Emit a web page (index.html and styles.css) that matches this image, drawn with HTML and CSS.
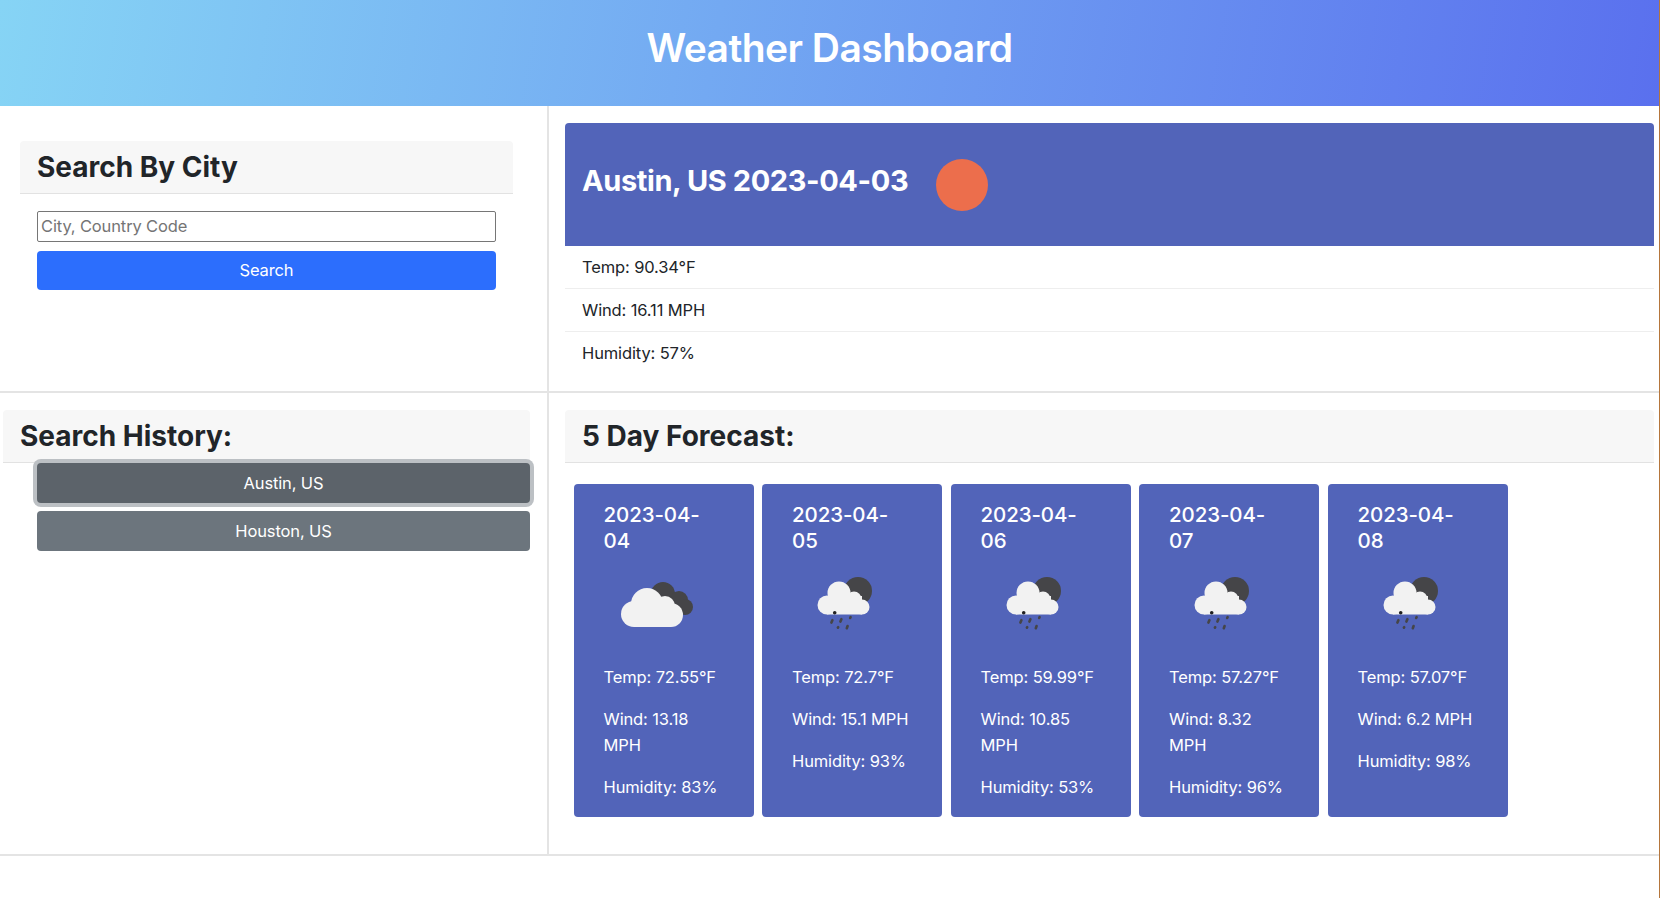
FILE: index.html
```html
<!DOCTYPE html>
<html lang="en">
<head>
  <meta charset="UTF-8">
  <meta name="viewport" content="width=device-width, initial-scale=1.0">
  <title>Weather Dashboard</title>
  <link rel="stylesheet" href="styles.css">
</head>
<body>

  <svg class="iconDefs" width="0" height="0">
    <symbol id="cloudsIcon" viewBox="0 0 100 100">
      <g fill="#454548">
        <circle cx="59" cy="40" r="12"/>
        <circle cx="75" cy="46" r="9"/>
        <circle cx="81" cy="53" r="8"/>
        <rect x="55" y="44" width="24" height="15"/>
      </g>
      <g fill="#f2f2f2">
        <circle cx="30" cy="60" r="13"/>
        <circle cx="43" cy="50" r="16"/>
        <circle cx="61" cy="52" r="10"/>
        <circle cx="67" cy="61" r="12"/>
        <rect x="30" y="50" width="37" height="23"/>
      </g>
    </symbol>
    <symbol id="rainIcon" viewBox="0 0 100 100">
      <circle cx="66" cy="37" r="14" fill="#454548"/>
      <g fill="#f2f2f2">
        <circle cx="35" cy="51" r="9.5"/>
        <circle cx="47" cy="39" r="11.5"/>
        <circle cx="62" cy="45" r="7.5"/>
        <circle cx="70" cy="53" r="7.5"/>
        <rect x="35" y="42" width="35" height="18.5"/>
      </g>
      <circle cx="42.7" cy="58.7" r="1.8" fill="#222"/>
      <g stroke="#454548" stroke-width="2.6" stroke-linecap="round">
        <path d="M40.4 66.2 L39.4 68.6"/>
        <path d="M49.4 65.2 L48.4 67.6"/>
        <path d="M58.6 63.2 L58.2 64"/>
        <path d="M46.2 73.2 L45.9 73.6"/>
        <path d="M55.6 72 L54.8 74.2"/>
      </g>
    </symbol>
  </svg>

  <div id="header">
    <h1>Weather Dashboard</h1>
  </div>

  <div class="row">
    <div class="sideCol searchCol">
      <div class="cardHeader">
        <h3>Search By City</h3>
      </div>
      <div class="searchForm">
        <input type="text" id="cityInput" placeholder="City, Country Code">
        <button class="searchBtn">Search</button>
      </div>
    </div>
    <div class="mainCol">
      <div class="todayHeader">
        <h2>Austin, US 2023-04-03</h2>
        <div class="sun"></div>
      </div>
      <ul class="todayList">
        <li>Temp: 90.34°F</li>
        <li>Wind: 16.11 MPH</li>
        <li>Humidity: 57%</li>
      </ul>
    </div>
  </div>

  <div class="row">
    <div class="sideCol historyCol">
      <div class="cardHeader">
        <h3>Search History:</h3>
      </div>
      <div class="historyList">
        <button class="historyBtn active">Austin, US</button>
        <button class="historyBtn">Houston, US</button>
      </div>
    </div>
    <div class="mainCol">
      <div class="cardHeader">
        <h3>5 Day Forecast:</h3>
      </div>
      <div class="forecast">
        <div class="dayCard">
          <h5>2023-04-04</h5>
          <svg class="dayIcon"><use href="#cloudsIcon"/></svg>
          <p>Temp: 72.55°F</p>
          <p>Wind: 13.18 MPH</p>
          <p>Humidity: 83%</p>
        </div>
        <div class="dayCard">
          <h5>2023-04-05</h5>
          <svg class="dayIcon"><use href="#rainIcon"/></svg>
          <p>Temp: 72.7°F</p>
          <p>Wind: 15.1 MPH</p>
          <p>Humidity: 93%</p>
        </div>
        <div class="dayCard">
          <h5>2023-04-06</h5>
          <svg class="dayIcon"><use href="#rainIcon"/></svg>
          <p>Temp: 59.99°F</p>
          <p>Wind: 10.85 MPH</p>
          <p>Humidity: 53%</p>
        </div>
        <div class="dayCard">
          <h5>2023-04-07</h5>
          <svg class="dayIcon"><use href="#rainIcon"/></svg>
          <p>Temp: 57.27°F</p>
          <p>Wind: 8.32 MPH</p>
          <p>Humidity: 96%</p>
        </div>
        <div class="dayCard">
          <h5>2023-04-08</h5>
          <svg class="dayIcon"><use href="#rainIcon"/></svg>
          <p>Temp: 57.07°F</p>
          <p>Wind: 6.2 MPH</p>
          <p>Humidity: 98%</p>
        </div>
      </div>
    </div>
  </div>

</body>
</html>
```

FILE: styles.css
```css
* {
  box-sizing: border-box;
}

body {
  font-family: Inter, "Liberation Sans", sans-serif;
  font-size: 16.5px;
  letter-spacing: -0.13px;
  line-height: 25.5px;
  color: #212529;
  background-color: #fff;
  margin: 0;
  height: 898px;
  overflow: hidden;
  border-right: 1px solid #b5763c;
}

.iconDefs {
  display: block;
  height: 0;
}

#header {
  height: 106px;
  padding-bottom: 10px;
  background: linear-gradient(100deg, #86d4f5, #5a70ee);
  color: #fff;
  display: flex;
  align-items: center;
  justify-content: center;
}

#header h1 {
  margin: 0;
  font-size: 39px;
  letter-spacing: -0.55px;
  line-height: 48px;
  font-weight: 600;
}

.row {
  display: flex;
  border-bottom: 2px solid #e4e4e4;
}

.sideCol {
  width: 549px;
  flex: none;
  border-right: 2px solid #e4e4e4;
}

.mainCol {
  flex: 1;
  min-width: 0;
  padding: 17px 5px 0 16px;
}

.searchCol {
  padding: 35px 34px 0 20px;
}

.historyCol {
  padding: 17px 17px 0 3px;
}

.cardHeader {
  height: 53px;
  padding: 0 17px;
  background-color: #f7f7f7;
  border-bottom: 1px solid #e2e2e2;
  border-radius: 4px 4px 0 0;
  display: flex;
  align-items: center;
}

.cardHeader h3 {
  margin: 0;
  font-size: 28px;
  letter-spacing: 0;
  line-height: 34px;
  font-weight: 700;
}

.searchForm {
  padding: 17px 17px 0;
  display: flex;
  flex-direction: column;
  gap: 9px;
}

#cityInput {
  height: 31px;
  padding: 0 3px 2px;
  border: 1px solid #767676;
  border-radius: 2px;
  font-family: inherit;
  font-size: 16.5px;
  letter-spacing: -0.13px;
}

#cityInput::placeholder {
  color: #757575;
}

.searchBtn {
  height: 39px;
  padding: 0 0 2px;
  background-color: #2c6efd;
  color: #fff;
  border: none;
  border-radius: 4px;
  font-family: inherit;
  font-size: 16.5px;
  letter-spacing: -0.13px;
}

.historyList {
  padding-left: 34px;
  display: flex;
  flex-direction: column;
  gap: 8px;
}

.historyBtn {
  height: 40px;
  background-color: #6c757d;
  color: #fff;
  border: none;
  border-radius: 4px;
  font-family: inherit;
  font-size: 16.5px;
  letter-spacing: -0.13px;
}

.historyBtn.active {
  background-color: #5c636a;
  box-shadow: 0 0 0 4px #bcc0c4;
}

.todayHeader {
  height: 123px;
  padding: 0 17px;
  background-color: #5264b9;
  color: #fff;
  border-radius: 4px 4px 0 0;
  display: flex;
  align-items: center;
  gap: 28px;
}

.todayHeader h2 {
  margin: 0 0 7px;
  font-size: 29px;
  letter-spacing: -0.4px;
  line-height: 36px;
  font-weight: 700;
}

.sun {
  width: 52px;
  height: 52px;
  border-radius: 50%;
  background-color: #ec6e4c;
}

.todayList {
  list-style: none;
  margin: 0;
  padding: 0;
}

.todayList li {
  height: 43px;
  padding: 9px 17px 0;
  border-bottom: 1px solid #eee;
}

.todayList li:last-child {
  border-bottom: none;
  height: 59px;
}

.forecast {
  display: flex;
  gap: 8.5px;
  padding: 21px 0 37px 8.5px;
}

.dayCard {
  width: 180px;
  padding: 18px 30px 17px;
  background-color: #5264b9;
  color: #fff;
  border-radius: 4px;
}

.dayCard h5 {
  margin: 0;
  font-size: 20.5px;
  letter-spacing: -0.1px;
  line-height: 25.5px;
  font-weight: 500;
}

.dayIcon {
  display: block;
  width: 100px;
  height: 100px;
  margin: 1px 0 11px;
}

.dayCard p {
  margin: 0 0 16.5px;
}

.dayCard p:last-child {
  margin-bottom: 0;
}
```
